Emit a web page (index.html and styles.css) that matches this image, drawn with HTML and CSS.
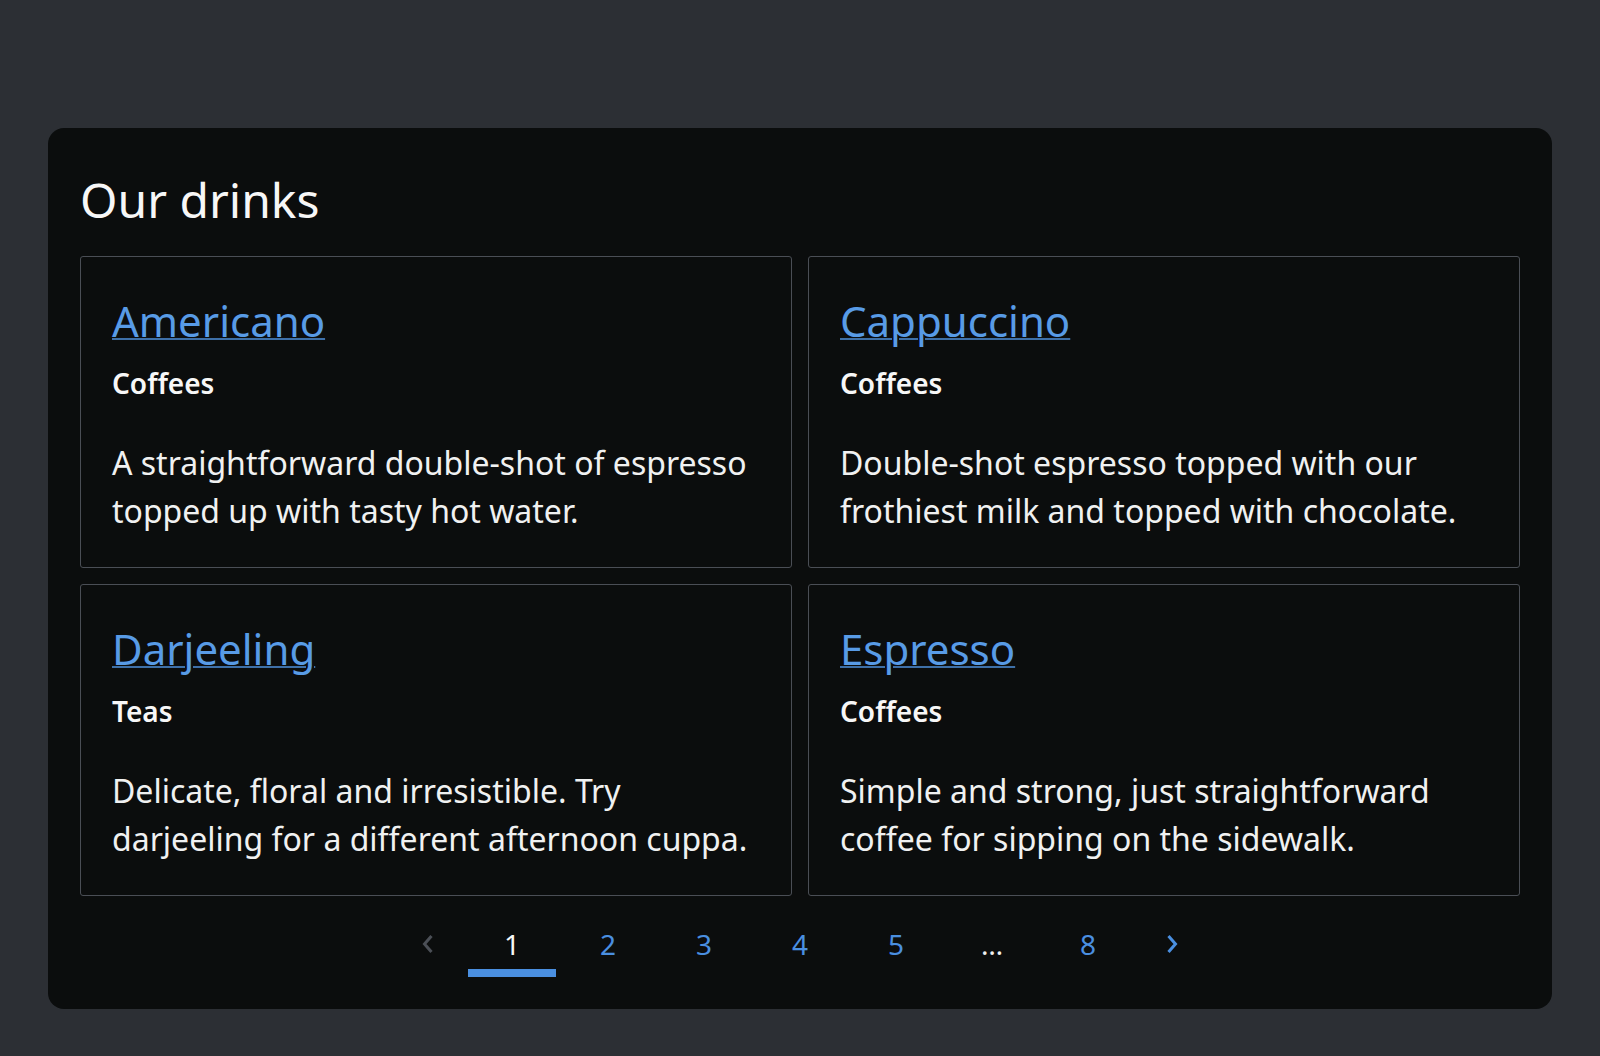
FILE: index.html
```html
<!DOCTYPE html>
<html lang="en">
<head>
<meta charset="utf-8">
<title>Our drinks</title>
<link rel="stylesheet" href="styles.css">
</head>
<body>
<section class="panel">
  <h2 class="panel-title">Our drinks</h2>
  <div class="grid">
    <article class="card">
      <h3 class="card-title"><a href="#">Americano</a></h3>
      <p class="card-cat">Coffees</p>
      <p class="card-desc">A straightforward double-shot of espresso topped up with tasty hot water.</p>
    </article>
    <article class="card">
      <h3 class="card-title"><a href="#">Cappuccino</a></h3>
      <p class="card-cat">Coffees</p>
      <p class="card-desc">Double-shot espresso topped with our frothiest milk and topped with chocolate.</p>
    </article>
    <article class="card">
      <h3 class="card-title"><a href="#">Darjeeling</a></h3>
      <p class="card-cat">Teas</p>
      <p class="card-desc">Delicate, floral and irresistible. Try darjeeling for a different afternoon cuppa.</p>
    </article>
    <article class="card">
      <h3 class="card-title"><a href="#">Espresso</a></h3>
      <p class="card-cat">Coffees</p>
      <p class="card-desc">Simple and strong, just straightforward coffee for sipping on the sidewalk.</p>
    </article>
  </div>
  <nav class="pager">
    <span class="pg pg-arrow pg-disabled"><svg width="12" height="20" viewBox="0 0 12 20"><path d="M9.5 2 L2.5 10 L9.5 18" fill="none" stroke="currentColor" stroke-width="3" stroke-linejoin="miter"/></svg></span>
    <span class="pg pg-active">1</span>
    <a class="pg" href="#">2</a>
    <a class="pg" href="#">3</a>
    <a class="pg" href="#">4</a>
    <a class="pg" href="#">5</a>
    <span class="pg pg-gap">…</span>
    <a class="pg" href="#">8</a>
    <a class="pg pg-arrow" href="#"><svg width="12" height="20" viewBox="0 0 12 20"><path d="M2.5 2 L9.5 10 L2.5 18" fill="none" stroke="currentColor" stroke-width="3" stroke-linejoin="miter"/></svg></a>
  </nav>
</section>
</body>
</html>
```

FILE: styles.css
```css
html, body {
  margin: 0;
  padding: 0;
}
body {
  background: #2c2f34;
  font-family: "Noto Sans", "Open Sans", sans-serif;
  color: #f4f5f5;
  padding: 128px 48px 48px;
}
.panel {
  background: #0b0d0d;
  border-radius: 16px;
  padding: 33px 32px 32px;
}
.panel-title {
  margin: 3px 0 20px;
  font-size: 48px;
  font-weight: 400;
  line-height: 72px;
  color: #f7f7f7;
}
.grid {
  display: grid;
  grid-template-columns: 1fr 1fr;
  gap: 16px;
}
.card {
  border: 1px solid #4a4e55;
  border-radius: 3px;
  padding: 32px 30px 32px 31px;
}
.card-title {
  margin: 0;
  font-size: 42px;
  font-weight: 400;
  line-height: 63px;
}
.card-title a {
  color: #589be6;
  text-decoration: underline;
  text-decoration-color: #3e70a8;
  text-decoration-thickness: 2px;
}
.card-cat {
  margin: 10px 0 0;
  font-size: 28px;
  font-weight: 600;
  line-height: 42px;
  color: #f7f7f7;
}
.card-desc {
  margin: 35px 0 0;
  font-size: 32px;
  font-weight: 400;
  line-height: 48px;
  color: #f0f1f1;
}
.pager {
  display: flex;
  justify-content: center;
  gap: 8px;
  margin-top: 17px;
}
.pg {
  box-sizing: border-box;
  width: 88px;
  height: 64px;
  padding-top: 10px;
  display: flex;
  justify-content: center;
  align-items: flex-start;
  font-size: 28px;
  line-height: 42px;
  color: #4a8fe0;
  text-decoration: none;
  border-bottom: 8px solid transparent;
}
.pg-active {
  color: #f7f7f7;
  border-bottom-color: #4a8fe0;
}
.pg-gap {
  color: #f0f0f0;
}
.pg-arrow {
  width: 64px;
  padding-top: 21px;
  color: #4a8fe0;
}
.pg-disabled {
  color: #4b4f56;
}
```
